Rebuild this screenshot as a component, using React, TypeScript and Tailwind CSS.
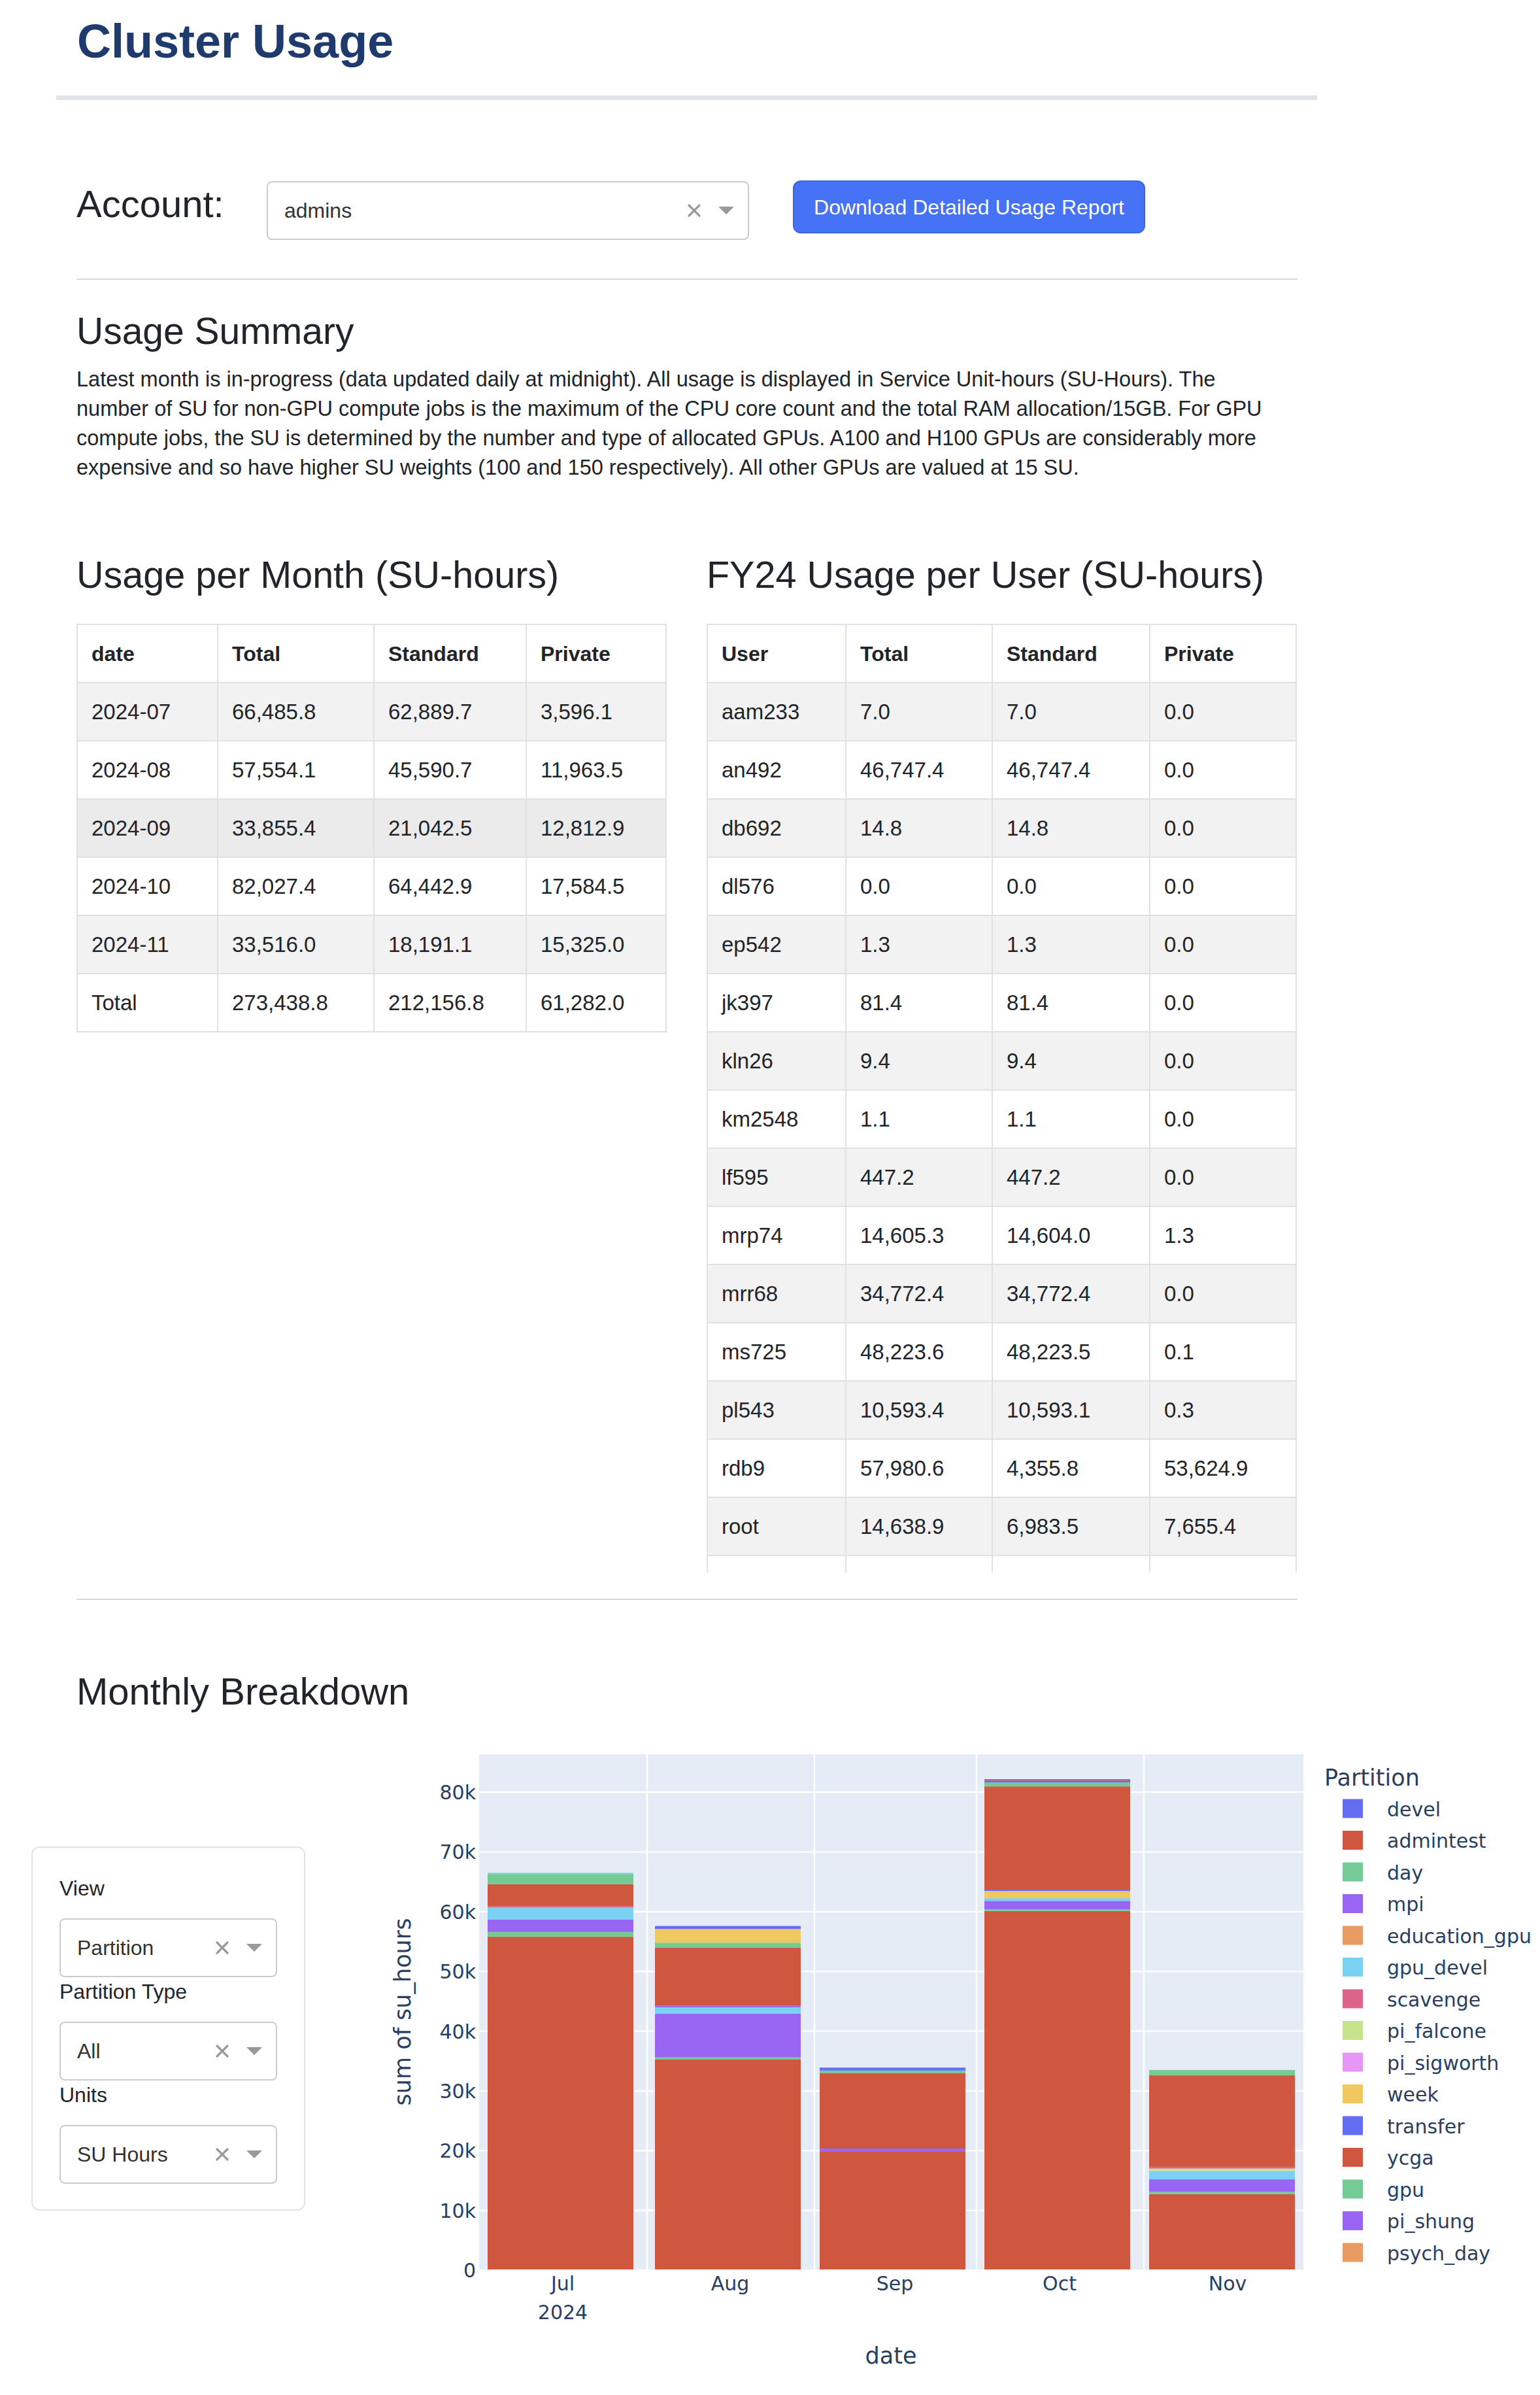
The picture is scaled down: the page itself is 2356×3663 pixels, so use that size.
import React from "react"

const monthly = [
  ["2024-07", "66,485.8", "62,889.7", "3,596.1"],
  ["2024-08", "57,554.1", "45,590.7", "11,963.5"],
  ["2024-09", "33,855.4", "21,042.5", "12,812.9"],
  ["2024-10", "82,027.4", "64,442.9", "17,584.5"],
  ["2024-11", "33,516.0", "18,191.1", "15,325.0"],
  ["Total", "273,438.8", "212,156.8", "61,282.0"],
]

const perUser = [
  ["aam233", "7.0", "7.0", "0.0"],
  ["an492", "46,747.4", "46,747.4", "0.0"],
  ["db692", "14.8", "14.8", "0.0"],
  ["dl576", "0.0", "0.0", "0.0"],
  ["ep542", "1.3", "1.3", "0.0"],
  ["jk397", "81.4", "81.4", "0.0"],
  ["kln26", "9.4", "9.4", "0.0"],
  ["km2548", "1.1", "1.1", "0.0"],
  ["lf595", "447.2", "447.2", "0.0"],
  ["mrp74", "14,605.3", "14,604.0", "1.3"],
  ["mrr68", "34,772.4", "34,772.4", "0.0"],
  ["ms725", "48,223.6", "48,223.5", "0.1"],
  ["pl543", "10,593.4", "10,593.1", "0.3"],
  ["rdb9", "57,980.6", "4,355.8", "53,624.9"],
  ["root", "14,638.9", "6,983.5", "7,655.4"],
  ["", "", "", ""],
]

// plotly palette as it shows in the screenshot
const C = {
  blue: "#636ef2",
  red: "#d0573f",
  green: "#74cb96",
  purple: "#9966f3",
  orange: "#e89c63",
  cyan: "#7bd1f1",
  pink: "#dc6489",
  lime: "#c6e48c",
  magenta: "#e697f6",
  yellow: "#efc862",
}

const legend: [string, string][] = [
  ["devel", C.blue],
  ["admintest", C.red],
  ["day", C.green],
  ["mpi", C.purple],
  ["education_gpu", C.orange],
  ["gpu_devel", C.cyan],
  ["scavenge", C.pink],
  ["pi_falcone", C.lime],
  ["pi_sigworth", C.magenta],
  ["week", C.yellow],
  ["transfer", C.blue],
  ["ycga", C.red],
  ["gpu", C.green],
  ["pi_shung", C.purple],
  ["psych_day", C.orange],
]

type Seg = [number, number, string]

const bars: { x: number; label: string; lx: number; segs: Seg[] }[] = [
  {
    x: 226, label: "Jul", lx: 341,
    segs: [[0, 55.8, C.red], [55.8, 56.6, C.green], [56.6, 58.7, C.purple], [58.7, 60.7, C.cyan], [60.7, 60.9, C.pink], [60.9, 64.6, C.red], [64.6, 66.3, C.green], [66.3, 66.5, C.cyan]],
  },
  {
    x: 482, label: "Aug", lx: 597,
    segs: [[0, 35.3, C.red], [35.3, 35.6, C.green], [35.6, 42.9, C.purple], [42.9, 44.0, C.cyan], [44.0, 44.3, C.purple], [44.3, 54.0, C.red], [54.0, 54.8, C.green], [54.8, 57.1, C.yellow], [57.1, 57.6, C.blue]],
  },
  {
    x: 734, label: "Sep", lx: 849,
    segs: [[0, 19.9, C.red], [19.9, 20.35, C.purple], [20.35, 33.0, C.red], [33.0, 33.4, C.green], [33.4, 33.9, C.blue]],
  },
  {
    x: 986, label: "Oct", lx: 1101,
    segs: [[0, 60.1, C.red], [60.1, 60.4, C.green], [60.4, 61.8, C.purple], [61.8, 62.25, C.cyan], [62.25, 63.46, C.yellow], [63.46, 63.7, C.blue], [63.7, 80.96, C.red], [80.96, 81.62, C.green], [81.62, 81.95, C.blue], [81.95, 82.17, C.red]],
  },
  {
    x: 1238, label: "Nov", lx: 1358,
    segs: [[0, 12.7, C.red], [12.7, 13.1, C.green], [13.1, 15.2, C.purple], [15.2, 16.6, C.cyan], [16.6, 17.0, C.lime], [17.0, 17.3, C.pink], [17.3, 32.6, C.red], [32.6, 33.5, C.green]],
  },
]

const Y = (v: number) => 832 - v * 9.1375

function Dropdown({ value, width }: { value: string; width: string }) {
  return (
    <div className={`flex items-center h-[90px] ${width} rounded-[8px] border-2 border-[#cccccc] bg-white pl-[25px] pr-[21px]`}>
      <span className="text-[32px] text-[#333333]">{value}</span>
      <svg className="ml-auto" width="22" height="22" viewBox="0 0 22 22">
        <path d="M3 3 L19 19 M19 3 L3 19" stroke="#999999" strokeWidth="3.2" strokeLinecap="round" />
      </svg>
      <svg className="ml-[26px]" width="24" height="12" viewBox="0 0 24 12">
        <path d="M0 0 H24 L12 12 Z" fill="#999999" />
      </svg>
    </div>
  )
}

function DataTable({ head, rows, cols, hover }: { head: string[]; rows: string[][]; cols: string; hover?: number }) {
  return (
    <div className="border-l-2 border-t-2 border-[#dee2e6]">
      <div className={`grid ${cols} h-[89px] border-b-2 border-[#dee2e6] text-[32px] font-bold`}>
        {head.map((h) => (
          <div key={h} className="flex items-center pl-[21px] border-r-2 border-[#dee2e6]">{h}</div>
        ))}
      </div>
      {rows.map((r, i) => (
        <div
          key={i}
          className={`grid ${cols} h-[89px] border-b-2 border-[#dee2e6] text-[33px] ${i === hover ? "bg-[#ebebeb]" : i % 2 === 0 ? "bg-[#f2f2f2]" : "bg-white"}`}
        >
          {r.map((c, j) => (
            <div key={j} className="flex items-center pl-[21px] border-r-2 border-[#dee2e6]">{c}</div>
          ))}
        </div>
      ))}
    </div>
  )
}

function Chart() {
  const text = "#2a3f5f"
  return (
    <svg width="1836" height="1023" viewBox="0 0 1836 1023" style={{ fontFamily: "'DejaVu Sans', Verdana, sans-serif" }}>
      <rect x="213" y="43" width="1261" height="789" fill="#e5ecf6" />
      {[10, 20, 30, 40, 50, 60, 70, 80].map((v) => (
        <line key={v} x1="213" x2="1474" y1={Y(v)} y2={Y(v)} stroke="#ffffff" strokeWidth="2.5" />
      ))}
      {[470, 726, 974, 1230].map((x) => (
        <line key={x} x1={x} x2={x} y1="43" y2="832" stroke="#ffffff" strokeWidth="2.5" />
      ))}
      {bars.map((b) =>
        b.segs.map(([a, z, c], i) => (
          <rect key={b.label + i} x={b.x} width="223" y={Y(z)} height={Y(a) - Y(z)} fill={c} />
        ))
      )}
      <line x1="213" x2="1474" y1="832" y2="832" stroke="#ffffff" strokeWidth="2" />
      {[0, 10, 20, 30, 40, 50, 60, 70, 80].map((v) => (
        <text key={v} x="208" y={Y(v) + 11} fontSize="30" fill={text} textAnchor="end">
          {v === 0 ? "0" : `${v}k`}
        </text>
      ))}
      {bars.map((b) => (
        <text key={b.label} x={b.lx} y="863" fontSize="30" fill={text} textAnchor="middle">{b.label}</text>
      ))}
      <text x="341" y="907" fontSize="30" fill={text} textAnchor="middle">2024</text>
      <text x="843" y="975" fontSize="35" fill={text} textAnchor="middle">date</text>
      <text transform="translate(108,437) rotate(-90)" fontSize="35" fill={text} textAnchor="middle">sum of su_hours</text>

      <text x="1506" y="91" fontSize="35" fill={text}>Partition</text>
      {legend.map(([name, color], i) => {
        const cy = 126.5 + 48.5 * i
        return (
          <g key={name}>
            <rect x="1534" y={cy - 15} width="31" height="29" fill={color} />
            <text x="1602" y={cy + 11} fontSize="30" fill={text}>{name}</text>
          </g>
        )
      })}
    </svg>
  )
}

export default function App() {
  return (
    <div className="w-[2356px] min-h-[3663px] bg-white pt-[20px] font-['Liberation_Sans',Arial,sans-serif] text-[#212529]">
      <h1 className="ml-[118px] h-[86px] text-[72px] leading-[86px] font-bold text-[#1f3a6d]">Cluster Usage</h1>
      <div className="mt-[40px] ml-[86px] w-[1929px] h-[7px] bg-[#e0e3e8]" />

      <div className="ml-[117px] w-[1868px]">
        <div className="mt-[123px] flex items-start">
          <div className="w-[291px] mt-[2px] text-[58px] leading-[68px]">Account:</div>
          <div className="mt-[1px]">
            <Dropdown value="admins" width="w-[738px]" />
          </div>
          <button className="ml-[67px] h-[81px] w-[539px] rounded-[12px] border-2 border-[#3d64e0] bg-[#4672f6] text-[32px] text-white">
            Download Detailed Usage Report
          </button>
        </div>

        <div className="mt-[59px] h-[2px] bg-[#d9d9d9]" />

        <h3 className="mt-[45px] text-[57px] leading-[67px]">Usage Summary</h3>
        <p className="mt-[18px] text-[32.5px] leading-[45px]">
          Latest month is in-progress (data updated daily at midnight). All usage is displayed in Service Unit-hours (SU-Hours). The
          <br />
          number of SU for non-GPU compute jobs is the maximum of the CPU core count and the total RAM allocation/15GB. For GPU
          <br />
          compute jobs, the SU is determined by the number and type of allocated GPUs. A100 and H100 GPUs are considerably more
          <br />
          expensive and so have higher SU weights (100 and 150 respectively). All other GPUs are valued at 15 SU.
        </p>

        <div className="mt-[107px] flex items-start">
          <div className="w-[903px]">
            <h3 className="text-[57.5px] leading-[68px]">Usage per Month (SU-hours)</h3>
            <div className="mt-[41px]">
              <DataTable
                head={["date", "Total", "Standard", "Private"]}
                rows={monthly}
                cols="grid-cols-[215px_239px_233px_214px]"
                hover={2}
              />
            </div>
          </div>
          <div className="ml-[61px] w-[903px]">
            <h3 className="text-[57.5px] leading-[68px]">FY24 Usage per User (SU-hours)</h3>
            <div className="mt-[41px] h-[1451px] overflow-hidden">
              <DataTable
                head={["User", "Total", "Standard", "Private"]}
                rows={perUser}
                cols="grid-cols-[212px_224px_241px_224px]"
              />
            </div>
          </div>
        </div>

        <div className="mt-[40px] h-[2px] bg-[#d9d9d9]" />

        <h3 className="mt-[106px] text-[58px] leading-[68px]">Monthly Breakdown</h3>
      </div>

      <div className="mt-[19px] flex items-start">
        <div className="ml-[48px] mt-[184px] w-[419px] h-[557px] rounded-[12px] border-2 border-[#e3e3e3] px-[41px] pt-[40px]">
          <div className="text-[32px] leading-[45px]">View</div>
          <div className="mt-[23px]">
            <Dropdown value="Partition" width="w-[333px]" />
          </div>
          <div className="text-[32px] leading-[45px]">Partition Type</div>
          <div className="mt-[23px]">
            <Dropdown value="All" width="w-[333px]" />
          </div>
          <div className="text-[32px] leading-[45px]">Units</div>
          <div className="mt-[23px]">
            <Dropdown value="SU Hours" width="w-[333px]" />
          </div>
        </div>
        <div className="ml-[53px]">
          <Chart />
        </div>
      </div>
    </div>
  )
}
